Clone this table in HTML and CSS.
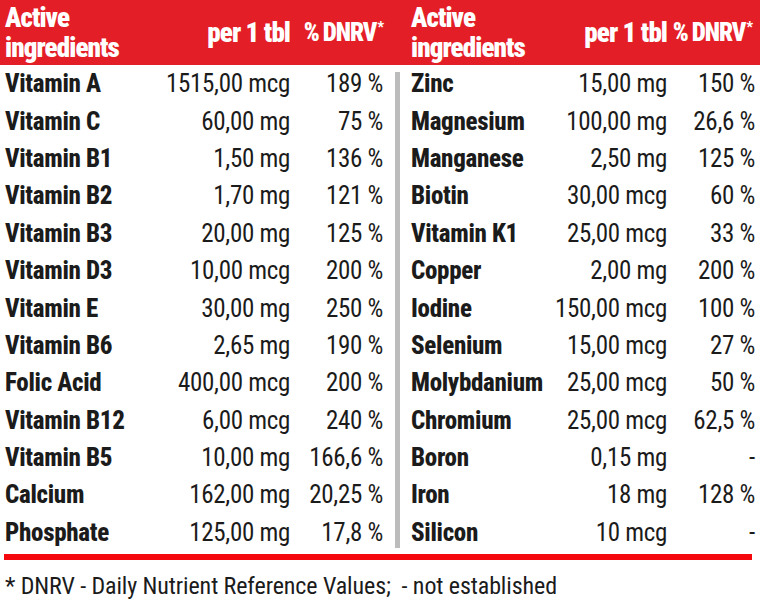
FILE: index.html
```html
<!DOCTYPE html>
<html>
<head>
<meta charset="utf-8">
<link rel="stylesheet" href="styles.css">
</head>
<body>
<div class="sheet">
  <div class="head">
    <div class="half left">
      <div class="hname">Active<br>ingredients</div>
      <div class="hnum">per 1 tbl</div>
      <div class="hnum hpct">% DNRV<span class="star">*</span></div>
    </div>
    <div class="hsep"></div>
    <div class="half right">
      <div class="hname">Active<br>ingredients</div>
      <div class="hnum">per 1 tbl</div>
      <div class="hnum hpct hlast">% DNRV<span class="star">*</span></div>
    </div>
  </div>
  <div class="body">
    <div class="half left">
      <div class="name">Vitamin A</div><div class="num">1515,00 mcg</div><div class="num">189 %</div>
      <div class="name">Vitamin C</div><div class="num">60,00 mg</div><div class="num">75 %</div>
      <div class="name">Vitamin B1</div><div class="num">1,50 mg</div><div class="num">136 %</div>
      <div class="name">Vitamin B2</div><div class="num">1,70 mg</div><div class="num">121 %</div>
      <div class="name">Vitamin B3</div><div class="num">20,00 mg</div><div class="num">125 %</div>
      <div class="name">Vitamin D3</div><div class="num">10,00 mcg</div><div class="num">200 %</div>
      <div class="name">Vitamin E</div><div class="num">30,00 mg</div><div class="num">250 %</div>
      <div class="name">Vitamin B6</div><div class="num">2,65 mg</div><div class="num">190 %</div>
      <div class="name">Folic Acid</div><div class="num">400,00 mcg</div><div class="num">200 %</div>
      <div class="name">Vitamin B12</div><div class="num">6,00 mcg</div><div class="num">240 %</div>
      <div class="name">Vitamin B5</div><div class="num">10,00 mg</div><div class="num">166,6 %</div>
      <div class="name">Calcium</div><div class="num">162,00 mg</div><div class="num">20,25 %</div>
      <div class="name">Phosphate</div><div class="num">125,00 mg</div><div class="num">17,8 %</div>
    </div>
    <div class="sep"></div>
    <div class="half right">
      <div class="name">Zinc</div><div class="num">15,00 mg</div><div class="num">150 %</div>
      <div class="name">Magnesium</div><div class="num">100,00 mg</div><div class="num">26,6 %</div>
      <div class="name">Manganese</div><div class="num">2,50 mg</div><div class="num">125 %</div>
      <div class="name">Biotin</div><div class="num">30,00 mcg</div><div class="num">60 %</div>
      <div class="name">Vitamin K1</div><div class="num">25,00 mcg</div><div class="num">33 %</div>
      <div class="name">Copper</div><div class="num">2,00 mg</div><div class="num">200 %</div>
      <div class="name">Iodine</div><div class="num">150,00 mcg</div><div class="num">100 %</div>
      <div class="name">Selenium</div><div class="num">15,00 mcg</div><div class="num">27 %</div>
      <div class="name">Molybdanium</div><div class="num">25,00 mcg</div><div class="num">50 %</div>
      <div class="name">Chromium</div><div class="num">25,00 mcg</div><div class="num">62,5 %</div>
      <div class="name">Boron</div><div class="num">0,15 mg</div><div class="num">-</div>
      <div class="name">Iron</div><div class="num">18 mg</div><div class="num">128 %</div>
      <div class="name">Silicon</div><div class="num">10 mcg</div><div class="num">-</div>
    </div>
  </div>
  <div class="rule"></div>
  <div class="foot">* DNRV - Daily Nutrient Reference Values;&nbsp; - not established</div>
</div>
</body>
</html>
```

FILE: styles.css
```css
html, body {
  margin: 0;
  padding: 0;
  background: #ffffff;
}
.sheet {
  width: 760px;
  height: 600px;
  overflow: hidden;
  font-family: "Roboto", "Open Sans", sans-serif;
  font-stretch: 75%;
  color: #1b1b1b;
}
.head {
  display: flex;
  height: 65px;
  background: #e41e26;
  color: #ffffff;
  font-weight: 900;
  font-size: 27px;
  letter-spacing: -0.9px;
}
.hsep {
  width: 5px;
}
.half {
  display: grid;
  align-items: center;
  white-space: nowrap;
}
.half.left {
  width: 395px;
  box-sizing: border-box;
  padding: 0 12px 0 5px;
  grid-template-columns: 150px 135px 93px;
}
.half.right {
  width: 360px;
  box-sizing: border-box;
  padding: 0 5px 0 11px;
  grid-template-columns: 134px 122px 88px;
}
.hname {
  line-height: 30px;
  padding-top: 1px;
}
.hnum {
  text-align: right;
}
.hpct {
  font-size: 25px;
  word-spacing: -1px;
  letter-spacing: -1px;
}
.hlast {
  margin-right: 3px;
}
.star {
  font-size: 14px;
  vertical-align: 9px;
  margin-left: 1px;
}
.body {
  display: flex;
  height: 486px;
}
.body .half {
  grid-auto-rows: 37.4px;
  font-size: 25px;
}
.name {
  font-weight: 800;
  letter-spacing: -0.3px;
}
.num {
  text-align: right;
  letter-spacing: -0.3px;
}
.sep {
  width: 5px;
  margin: 7px 0 3px;
  background: #bcbcbc;
}
.rule {
  height: 6px;
  margin: 3px 8px 0 4px;
  background: #f4070d;
}
.foot {
  padding: 12px 0 0 5px;
  font-size: 24px;
  line-height: 28px;
  letter-spacing: -0.1px;
}
```
